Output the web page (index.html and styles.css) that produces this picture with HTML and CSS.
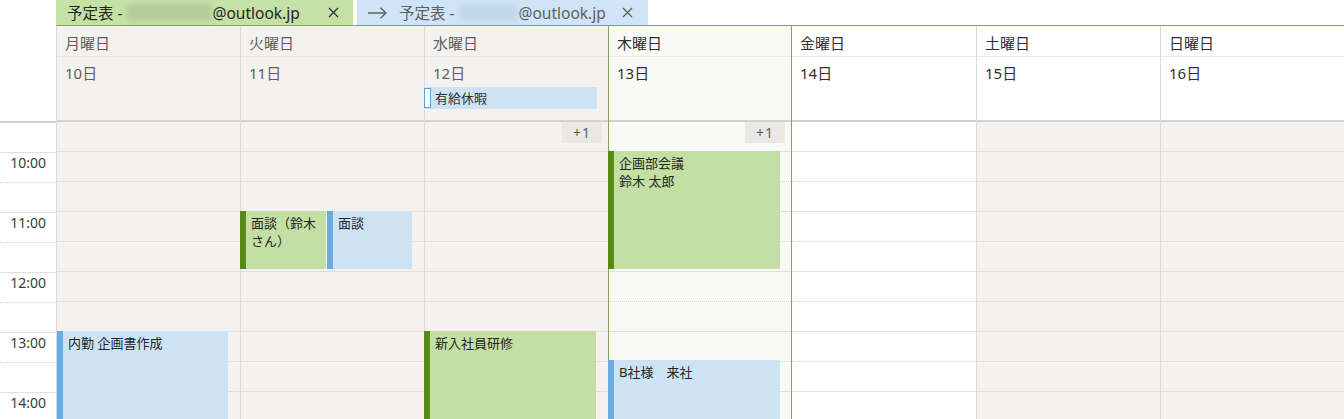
FILE: index.html
```html
<!DOCTYPE html>
<html lang="ja">
<head>
    <meta charset="UTF-8">
    <title>予定表</title>
    <link rel="stylesheet" href="styles.css">
</head>
<body>
<div class="tabs">
    <div class="tab tab-mine">
        <span>予定表 -</span><span class="masked masked-long"></span><span>@outlook.jp</span>
        <svg class="close" width="11" height="11" viewBox="0 0 11 11"><path d="M1 1L10 10M10 1L1 10" stroke="#323130" stroke-width="1.3" fill="none"/></svg>
    </div>
    <div class="tab tab-shared">
        <svg class="arrow" width="19" height="12" viewBox="0 0 19 12"><path d="M0 6H18M12.5 0.8L18 6L12.5 11.2" stroke="#605e5c" stroke-width="1.3" fill="none"/></svg>
        <span>予定表 -</span><span class="masked masked-short"></span><span>@outlook.jp</span>
        <svg class="close" width="11" height="11" viewBox="0 0 11 11"><path d="M1 1L10 10M10 1L1 10" stroke="#605e5c" stroke-width="1.3" fill="none"/></svg>
    </div>
</div>

<div class="week">
    <div class="times">
        <div class="head-blank"></div>
        <div class="allday"></div>
        <div class="hours">
            <div class="hour"><span>10:00</span></div>
            <div class="hour"><span>11:00</span></div>
            <div class="hour"><span>12:00</span></div>
            <div class="hour"><span>13:00</span></div>
            <div class="hour"><span>14:00</span></div>
        </div>
    </div>

    <div class="day past">
        <div class="day-name">月曜日</div>
        <div class="day-date">10日</div>
        <div class="allday"></div>
        <div class="hours">
            <div class="hour"></div><div class="hour"></div><div class="hour"></div><div class="hour"></div><div class="hour"></div>
            <div class="event blue" style="top:180px;height:120px;left:0;width:171px">内勤 企画書作成</div>
        </div>
    </div>

    <div class="day past">
        <div class="day-name">火曜日</div>
        <div class="day-date">11日</div>
        <div class="allday"></div>
        <div class="hours">
            <div class="hour"></div><div class="hour"></div><div class="hour"></div><div class="hour"></div><div class="hour"></div>
            <div class="event green" style="top:60px;height:58px;left:-1px;width:86px">面談（鈴木さん）</div>
            <div class="event blue" style="top:60px;height:58px;left:86px;width:85px">面談</div>
        </div>
    </div>

    <div class="day past">
        <div class="day-name">水曜日</div>
        <div class="day-date">12日
            <div class="allday-event">有給休暇</div>
        </div>
        <div class="allday"><span class="more">+1</span></div>
        <div class="hours">
            <div class="hour"></div><div class="hour"></div><div class="hour"></div><div class="hour"></div><div class="hour"></div>
            <div class="event green" style="top:180px;height:120px;left:-1px;width:172px">新入社員研修</div>
        </div>
    </div>

    <div class="day today">
        <div class="day-name">木曜日</div>
        <div class="day-date">13日</div>
        <div class="allday"><span class="more">+1</span></div>
        <div class="hours">
            <div class="hour"></div><div class="hour"></div><div class="hour"></div><div class="hour"></div><div class="hour"></div>
            <div class="event green" style="top:0;height:118px;left:-1px;width:172px">企画部会議<br>鈴木 太郎</div>
            <div class="event blue" style="top:209px;height:100px;left:-1px;width:172px">B社様　来社</div>
        </div>
    </div>

    <div class="day next">
        <div class="day-name">金曜日</div>
        <div class="day-date">14日</div>
        <div class="allday"></div>
        <div class="hours">
            <div class="hour"></div><div class="hour"></div><div class="hour"></div><div class="hour"></div><div class="hour"></div>
        </div>
    </div>

    <div class="day weekend">
        <div class="day-name">土曜日</div>
        <div class="day-date">15日</div>
        <div class="allday"></div>
        <div class="hours">
            <div class="hour"></div><div class="hour"></div><div class="hour"></div><div class="hour"></div><div class="hour"></div>
        </div>
    </div>

    <div class="day weekend">
        <div class="day-name">日曜日</div>
        <div class="day-date">16日</div>
        <div class="allday"></div>
        <div class="hours">
            <div class="hour"></div><div class="hour"></div><div class="hour"></div><div class="hour"></div><div class="hour"></div>
        </div>
    </div>
</div>
</body>
</html>
```

FILE: styles.css
```css
body {
    margin: 0;
    font-family: "Noto Sans", "Noto Sans CJK JP", sans-serif;
    color: #323130;
    background: #fff;
    overflow: hidden;
}

/* tabs */
.tabs {
    display: flex;
    gap: 4px;
    height: 25px;
    margin-left: 56px;
    border-bottom: 1px solid #7fa957;
}
.tab {
    display: flex;
    align-items: center;
    box-sizing: border-box;
    height: 25px;
    padding: 0 14px 0 11px;
    font-size: 15.5px;
    white-space: nowrap;
}
.tab-mine {
    width: 297px;
    background: #c5e1a6;
    color: #252423;
}
.tab-shared {
    width: 291px;
    background: #cfe4f6;
    color: #605e5c;
    padding-right: 15px;
}
.tab .arrow {
    margin-right: 12px;
}
.masked {
    display: inline-block;
    height: 17px;
    margin: 0 2px 0 4px;
    filter: blur(2px);
}
.tab-mine .masked {
    width: 84px;
    background: #b3cd9a;
}
.tab-shared .masked {
    width: 58px;
    background: #c2d9ea;
}
.close {
    margin-left: auto;
}

/* week grid */
.week {
    display: flex;
    height: 393px;
    overflow: hidden;
}
.times {
    width: 56px;
    flex: none;
}
.head-blank {
    height: 95px;
}
.times .hour span {
    display: block;
    padding-right: 10px;
    text-align: right;
    font-size: 14px;
    line-height: 20px;
    color: #3b3a39;
}

.day {
    width: 184px;
    flex: none;
    box-sizing: border-box;
    border-left: 1px solid #dddbd9;
    background: #fff;
}
.day-name {
    height: 31px;
    box-sizing: border-box;
    padding: 3px 0 0 8px;
    line-height: 28px;
    font-size: 15px;
    border-bottom: 1px solid #ebe9e7;
}
.day-date {
    height: 63px;
    box-sizing: border-box;
    padding: 6px 0 0 8px;
    line-height: 20px;
    font-size: 15px;
}
.allday {
    height: 31px;
    box-sizing: border-box;
    border-top: 2px solid #d4d2d0;
    display: flex;
    justify-content: flex-end;
    padding-right: 6px;
}
.hours {
    position: relative;
}
.hour {
    position: relative;
    height: 60px;
    box-sizing: border-box;
    border-top: 1px solid #e1dfdd;
}
.hour::after {
    content: "";
    position: absolute;
    left: 0;
    right: 0;
    top: 29px;
    border-top: 1px dotted #d5d3d1;
}

.past .day-name,
.past .day-date {
    color: #605e5c;
}
.past,
.weekend .allday,
.weekend .hours {
    background: #f3f2f1;
}
.today {
    background: #f9faf6;
    border-left: 1px solid #7fa957;
    border-right: 1px solid #7fa957;
}
.next {
    border-left: 0;
}

.more {
    width: 40px;
    height: 21px;
    background: #e9e8e6;
    color: #605e5c;
    font-size: 14px;
    line-height: 21px;
    text-align: center;
    letter-spacing: 1px;
}

.allday-event {
    margin: 4px 11px 0 -9px;
    height: 22px;
    background: #cde3f3;
    color: #323130;
    font-size: 13px;
    line-height: 22px;
    display: flex;
    align-items: center;
}
.allday-event::before {
    content: "";
    width: 5px;
    height: 18px;
    margin-right: 4px;
    background: #fff;
    border: 1px solid #5a9fd6;
}

.event {
    position: absolute;
    box-sizing: border-box;
    padding: 3px 4px 0 5px;
    font-size: 13px;
    line-height: 18px;
    color: #252423;
    overflow: hidden;
}
.event.green {
    background: #c3dfa4;
    border-left: 6px solid #578a15;
}
.event.blue {
    background: #cde3f3;
    border-left: 6px solid #69ace2;
}
```
